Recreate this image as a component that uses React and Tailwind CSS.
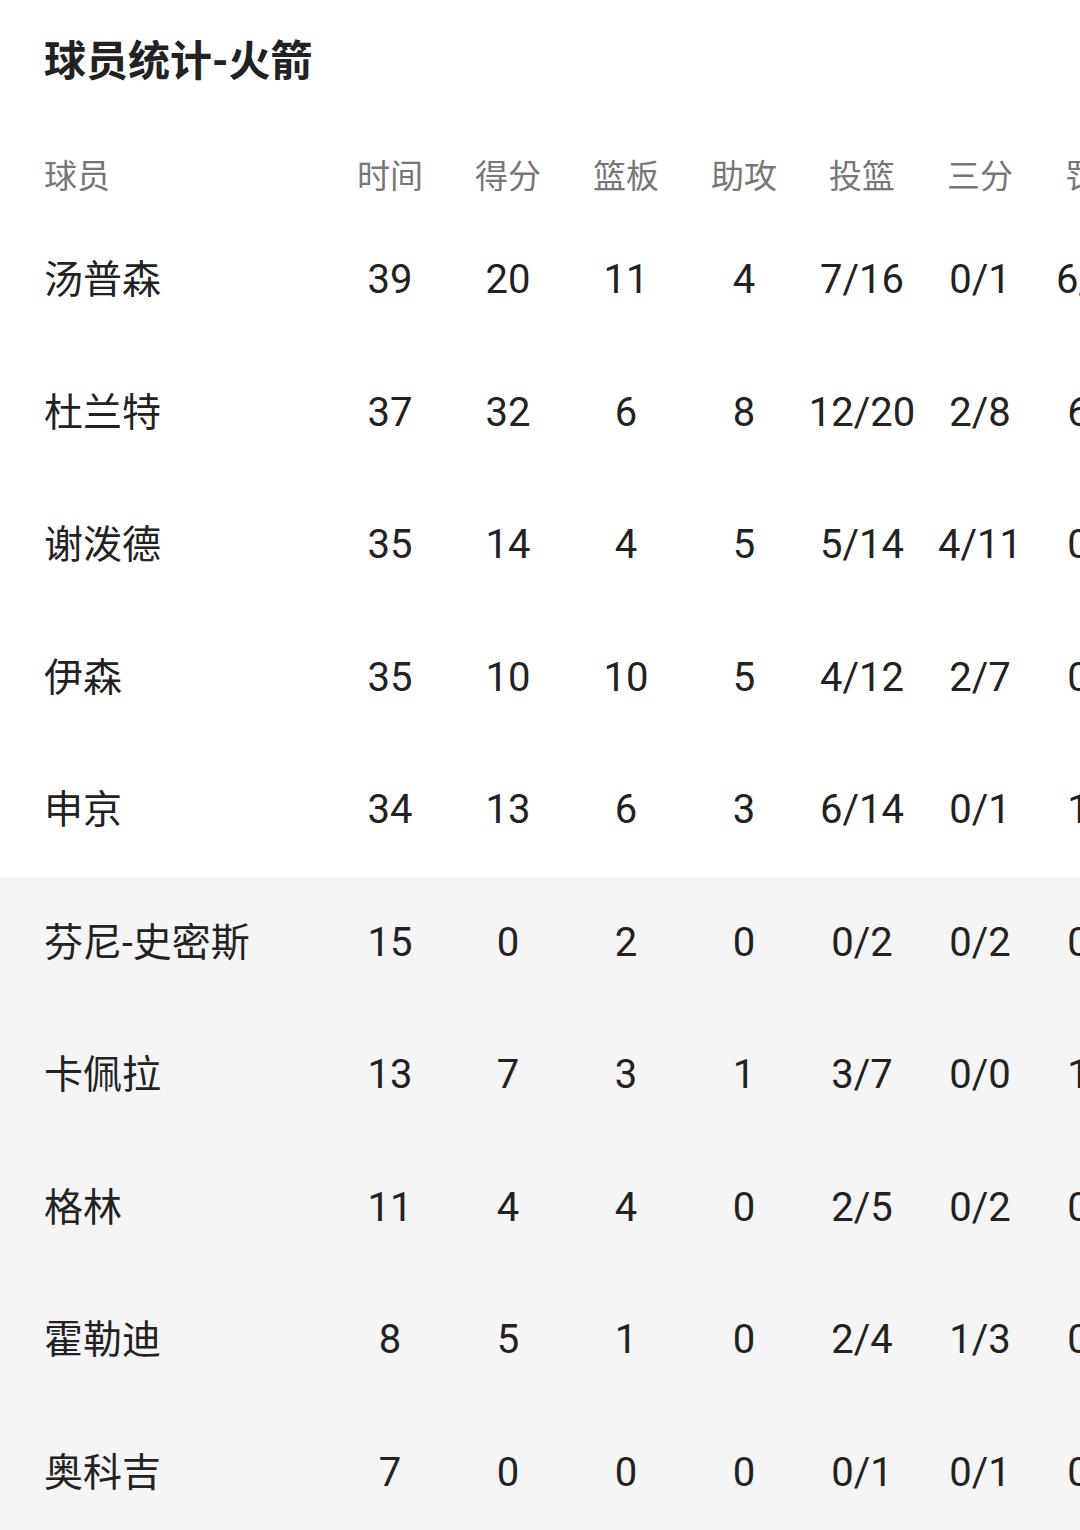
import React from 'react'

const columns = ['时间', '得分', '篮板', '助攻', '投篮', '三分', '罚球']

const players = [
  { name: '汤普森', stats: ['39', '20', '11', '4', '7/16', '0/1', '6/10'], bench: false },
  { name: '杜兰特', stats: ['37', '32', '6', '8', '12/20', '2/8', '6/6'], bench: false },
  { name: '谢泼德', stats: ['35', '14', '4', '5', '5/14', '4/11', '0/0'], bench: false },
  { name: '伊森', stats: ['35', '10', '10', '5', '4/12', '2/7', '0/0'], bench: false },
  { name: '申京', stats: ['34', '13', '6', '3', '6/14', '0/1', '1/2'], bench: false },
  { name: '芬尼-史密斯', stats: ['15', '0', '2', '0', '0/2', '0/2', '0/0'], bench: true },
  { name: '卡佩拉', stats: ['13', '7', '3', '1', '3/7', '0/0', '1/2'], bench: true },
  { name: '格林', stats: ['11', '4', '4', '0', '2/5', '0/2', '0/0'], bench: true },
  { name: '霍勒迪', stats: ['8', '5', '1', '0', '2/4', '1/3', '0/0'], bench: true },
  { name: '奥科吉', stats: ['7', '0', '0', '0', '0/1', '0/1', '0/0'], bench: true },
]

const font = { fontFamily: 'Roboto, "Noto Sans CJK SC", sans-serif' }

const App = () => {
  return (
    <div className="w-[1080px] h-[1530px] bg-white overflow-hidden" style={font}>
      {/* Title */}
      <div className="h-[124px] flex items-center pl-[44px]">
        <h1 className="text-[42px] font-bold text-[#222] leading-none">球员统计-火箭</h1>
      </div>

      {/* Header */}
      <div className="h-[90px] pt-4 pl-[44px] grid grid-cols-[287px_repeat(7,118px)] items-center text-[33px] text-[#777]">
        <div>球员</div>
        {columns.map((c) => (
          <div key={c} className="text-center whitespace-nowrap">{c}</div>
        ))}
      </div>

      {/* Rows */}
      {players.map((p) => (
        <div
          key={p.name}
          className={`h-[132.5px] pl-[44px] grid grid-cols-[287px_repeat(7,118px)] items-center text-[40px] text-[#222] ${
            p.bench ? 'bg-[#f5f5f5]' : 'bg-white'
          }`}
        >
          <div className="whitespace-nowrap text-[39px]">{p.name}</div>
          {p.stats.map((s, i) => (
            <div key={i} className="text-center whitespace-nowrap">{s}</div>
          ))}
        </div>
      ))}
    </div>
  )
}

export default App
